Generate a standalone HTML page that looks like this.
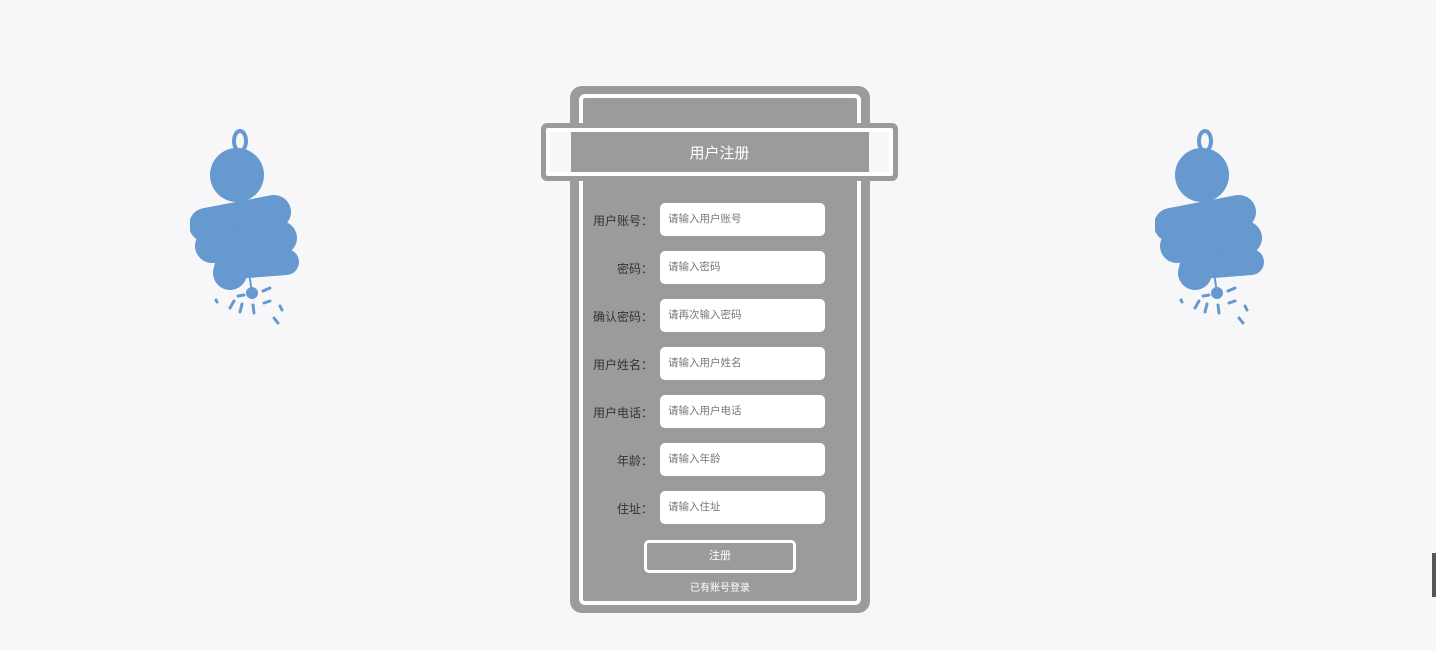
<!DOCTYPE html>
<html><head><meta charset="utf-8"><style>
body{margin:0;width:1436px;height:650px;background:#f7f7f9;position:relative;overflow:hidden;font-family:"Liberation Sans","Noto Sans CJK SC",sans-serif}
.card{position:absolute;left:570px;top:86px;width:300px;height:527px;background:#9a9c9c;border-radius:12px}
.inner{position:absolute;left:579px;top:94px;width:274px;height:503px;border:4px solid #fff;border-radius:6px}
.hdr{position:absolute;left:541px;top:123px;width:357px;height:58px;border-radius:6px;background:#9a9c9c}
.hdr .w{position:absolute;left:5px;top:5px;right:5px;bottom:5px;border:4px solid #fff;border-radius:2px;background:#f7f7f9}
.hdr .g{position:absolute;left:30px;top:9px;width:298px;height:40px;background:#9a9c9c}
.hdr .t{position:absolute;left:0;right:0;top:19px;text-align:center;color:#fff;font-size:15px}
.lab{position:absolute;width:100px;left:553px;text-align:right;font-size:12px;color:#333}
.in{position:absolute;left:660px;width:165px;height:33px;background:#fff;border-radius:5px;font-size:10.5px;color:#777;line-height:33px;text-indent:8px}
.btn{position:absolute;left:644px;top:540px;width:146px;height:27px;border:3px solid #fff;border-radius:5px;color:#fff;font-size:11px;text-align:center;line-height:27px}
.lnk{position:absolute;left:570px;width:300px;top:579px;text-align:center;color:#fff;font-size:10px}
.bar{position:absolute;left:1432px;top:553px;width:4px;height:44px;background:#555}
</style></head><body>
<svg width="0" height="0" style="position:absolute"><defs><g id="fig" fill="#6699d0" stroke="#6699d0">
<ellipse cx="50" cy="13" rx="6" ry="10" fill="none" stroke-width="4"/>
<circle cx="47" cy="47" r="27" stroke="none"/>
<line x1="48" y1="70" x2="62" y2="165" stroke-width="2"/>
<g stroke-linecap="round">
<line x1="16" y1="97" x2="84" y2="84" stroke-width="34"/>
<line x1="22" y1="118" x2="90" y2="110" stroke-width="34"/>
<line x1="45" y1="138" x2="96" y2="134" stroke-width="26"/>
<line x1="40" y1="145" x2="45" y2="125" stroke-width="34"/>
</g>
<circle cx="62" cy="165" r="6" stroke="none"/>
<g stroke-width="3" stroke-linecap="round">
<line x1="40" y1="180" x2="44" y2="173"/><line x1="50" y1="184" x2="52" y2="176"/><line x1="64" y1="185" x2="63" y2="177"/><line x1="74" y1="175" x2="80" y2="173"/><line x1="73" y1="163" x2="80" y2="160"/><line x1="48" y1="168" x2="54" y2="167"/><line x1="84" y1="190" x2="88" y2="195"/><line x1="90" y1="178" x2="92" y2="182"/><line x1="26" y1="172" x2="27" y2="174"/>
</g></g></defs></svg>
<svg style="position:absolute;left:190px;top:128px" width="110" height="200" viewBox="0 0 110 200"><use href="#fig"/></svg>
<svg style="position:absolute;left:1155px;top:128px" width="110" height="200" viewBox="0 0 110 200"><use href="#fig"/></svg>
<div class="card"></div><div class="inner"></div>
<div class="hdr"><div class="w"></div><div class="g"></div><div class="t">用户注册</div></div>
<div class="lab" style="top:212px">用户账号：</div><div class="in" style="top:203px">请输入用户账号</div>
<div class="lab" style="top:260px">密码：</div><div class="in" style="top:251px">请输入密码</div>
<div class="lab" style="top:308px">确认密码：</div><div class="in" style="top:299px">请再次输入密码</div>
<div class="lab" style="top:356px">用户姓名：</div><div class="in" style="top:347px">请输入用户姓名</div>
<div class="lab" style="top:404px">用户电话：</div><div class="in" style="top:395px">请输入用户电话</div>
<div class="lab" style="top:452px">年龄：</div><div class="in" style="top:443px">请输入年龄</div>
<div class="lab" style="top:500px">住址：</div><div class="in" style="top:491px">请输入住址</div>
<div class="btn">注册</div>
<div class="lnk">已有账号登录</div>
<div class="bar"></div>
</body></html>
